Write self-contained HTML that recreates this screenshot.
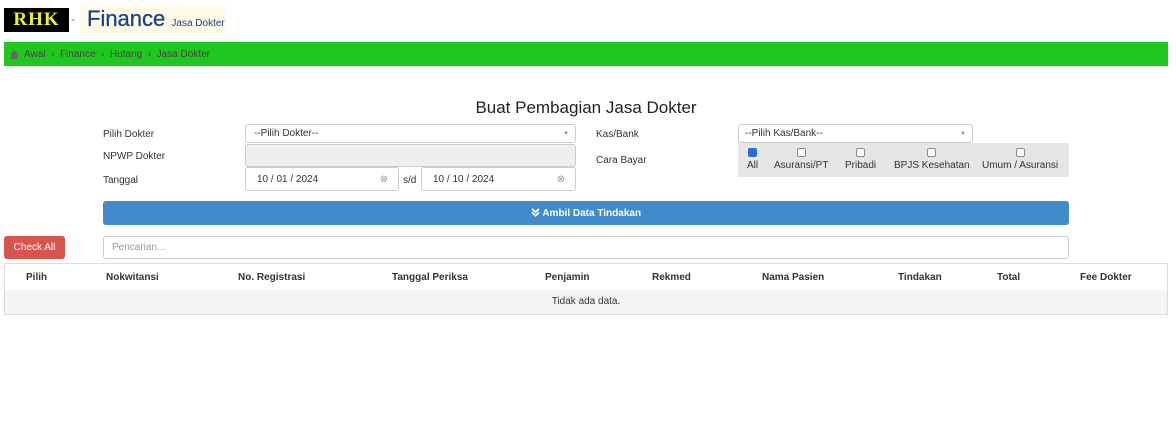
<!DOCTYPE html>
<html><head><meta charset="utf-8"><style>
*{box-sizing:border-box}
body{margin:0;width:1176px;height:443px;background:#fff;font-family:"Liberation Sans",sans-serif;font-size:10px;color:#333;position:relative;overflow:hidden}
.a{position:absolute}
.inp{position:absolute;border:1px solid #ccc;border-radius:3px;background:#fff;font-size:10px;padding-left:8px;display:flex;align-items:center}
.cb{display:inline-block;width:9px;height:9px;border:1px solid #888;border-radius:2px;background:#fff}
</style></head><body>
<div class="a" style="left:4px;top:8px;width:65px;height:24px;background:#000;color:#ee3;font-family:'Liberation Serif',serif;font-weight:bold;font-size:19px;text-align:center;line-height:24px;letter-spacing:1px">RHK</div>
<div class="a" style="left:71px;top:12px;color:#777;font-size:12px">-</div>
<div class="a" style="left:80px;top:5px;width:146px;height:28px;background:#fefae8"></div>
<div class="a" style="left:87px;top:6px;color:#1a4680;font-size:22px;-webkit-text-stroke:0.3px #1a4680">Finance <span style="font-size:10px;-webkit-text-stroke:0">Jasa Dokter</span></div>
<div class="a" style="left:4px;top:42px;width:1164px;height:24px;background:#1ec81e;color:#444;font-size:10px;line-height:24px;padding-left:20px;padding-top:1px">Awal &nbsp;›&nbsp; Finance &nbsp;›&nbsp; Hutang &nbsp;›&nbsp; Jasa Dokter</div>
<div class="a" style="left:10px;top:50px;width:9px;height:9px;background:#666;clip-path:polygon(50% 0,100% 50%,85% 50%,85% 100%,15% 100%,15% 50%,0 50%)"></div>
<div class="a" style="left:0;top:98px;width:1172px;text-align:center;font-size:17px;color:#222">Buat Pembagian Jasa Dokter</div>
<div class="a" style="left:103px;top:129px">Pilih Dokter</div>
<div class="a" style="left:103px;top:151px">NPWP Dokter</div>
<div class="a" style="left:103px;top:175px">Tanggal</div>
<div class="inp" style="left:245px;top:124px;width:331px;height:19px">--Pilih Dokter--<span class="a" style="right:6px;font-size:6px;color:#888">▼</span></div>
<div class="inp" style="left:245px;top:144px;width:331px;height:23px;background:#eee"></div>
<div class="inp" style="left:245px;top:167px;width:154px;height:24px;padding-left:11px">10 / 01 / 2024<span class="a" style="right:10px;color:#999">⊗</span></div>
<div class="a" style="left:403px;top:175px">s/d</div>
<div class="inp" style="left:421px;top:167px;width:155px;height:24px;padding-left:11px">10 / 10 / 2024<span class="a" style="right:10px;color:#999">⊗</span></div>
<div class="a" style="left:596px;top:129px">Kas/Bank</div>
<div class="a" style="left:596px;top:155px">Cara Bayar</div>
<div class="inp" style="left:738px;top:124px;width:235px;height:19px;padding-left:6px">--Pilih Kas/Bank--<span class="a" style="right:6px;font-size:6px;color:#888">▼</span></div>
<div class="a" style="left:738px;top:143px;width:331px;height:34px;background:#e6e6e6;color:#555"></div>
<div class="a" style="left:747px;top:148px;text-align:center"><span class="cb" style="background:#2a6fd0;border-color:#2a6fd0"></span><br>All</div>
<div class="a" style="left:774px;top:148px;text-align:center"><span class="cb"></span><br>Asuransi/PT</div>
<div class="a" style="left:845px;top:148px;text-align:center"><span class="cb"></span><br>Pribadi</div>
<div class="a" style="left:894px;top:148px;text-align:center"><span class="cb"></span><br>BPJS Kesehatan</div>
<div class="a" style="left:982px;top:148px;text-align:center"><span class="cb"></span><br>Umum / Asuransi</div>
<div class="a" style="left:103px;top:201px;width:966px;height:24px;background:#428bca;border-radius:3px;color:#fff;font-weight:bold;text-align:center;line-height:26px"><svg width="9" height="9" viewBox="0 0 10 10" style="vertical-align:-1px"><path d="M1 1l4 3.5 4-3.5M1 5l4 3.5 4-3.5" stroke="#fff" stroke-width="2" fill="none"/></svg> Ambil Data Tindakan</div>
<div class="a" style="left:4px;top:236px;width:61px;height:23px;background:#d9534f;border-radius:3px;color:#fff;text-align:center;line-height:24px">Check All</div>
<div class="inp" style="left:103px;top:236px;width:966px;height:23px;color:#999">Pencarian...</div>
<div class="a" style="left:4px;top:263px;width:1164px;height:52px;border:1px solid #ddd"></div>
<div class="a" style="left:5px;top:290px;width:1162px;height:24px;background:#f5f5f5;text-align:center;line-height:24px">Tidak ada data.</div>
<div class="a" style="top:272px;left:26px;font-weight:bold">Pilih</div>
<div class="a" style="top:272px;left:106px;font-weight:bold">Nokwitansi</div>
<div class="a" style="top:272px;left:238px;font-weight:bold">No. Registrasi</div>
<div class="a" style="top:272px;left:392px;font-weight:bold">Tanggal Periksa</div>
<div class="a" style="top:272px;left:545px;font-weight:bold">Penjamin</div>
<div class="a" style="top:272px;left:652px;font-weight:bold">Rekmed</div>
<div class="a" style="top:272px;left:762px;font-weight:bold">Nama Pasien</div>
<div class="a" style="top:272px;left:898px;font-weight:bold">Tindakan</div>
<div class="a" style="top:272px;left:997px;font-weight:bold">Total</div>
<div class="a" style="top:272px;left:1080px;font-weight:bold">Fee Dokter</div>
</body></html>
